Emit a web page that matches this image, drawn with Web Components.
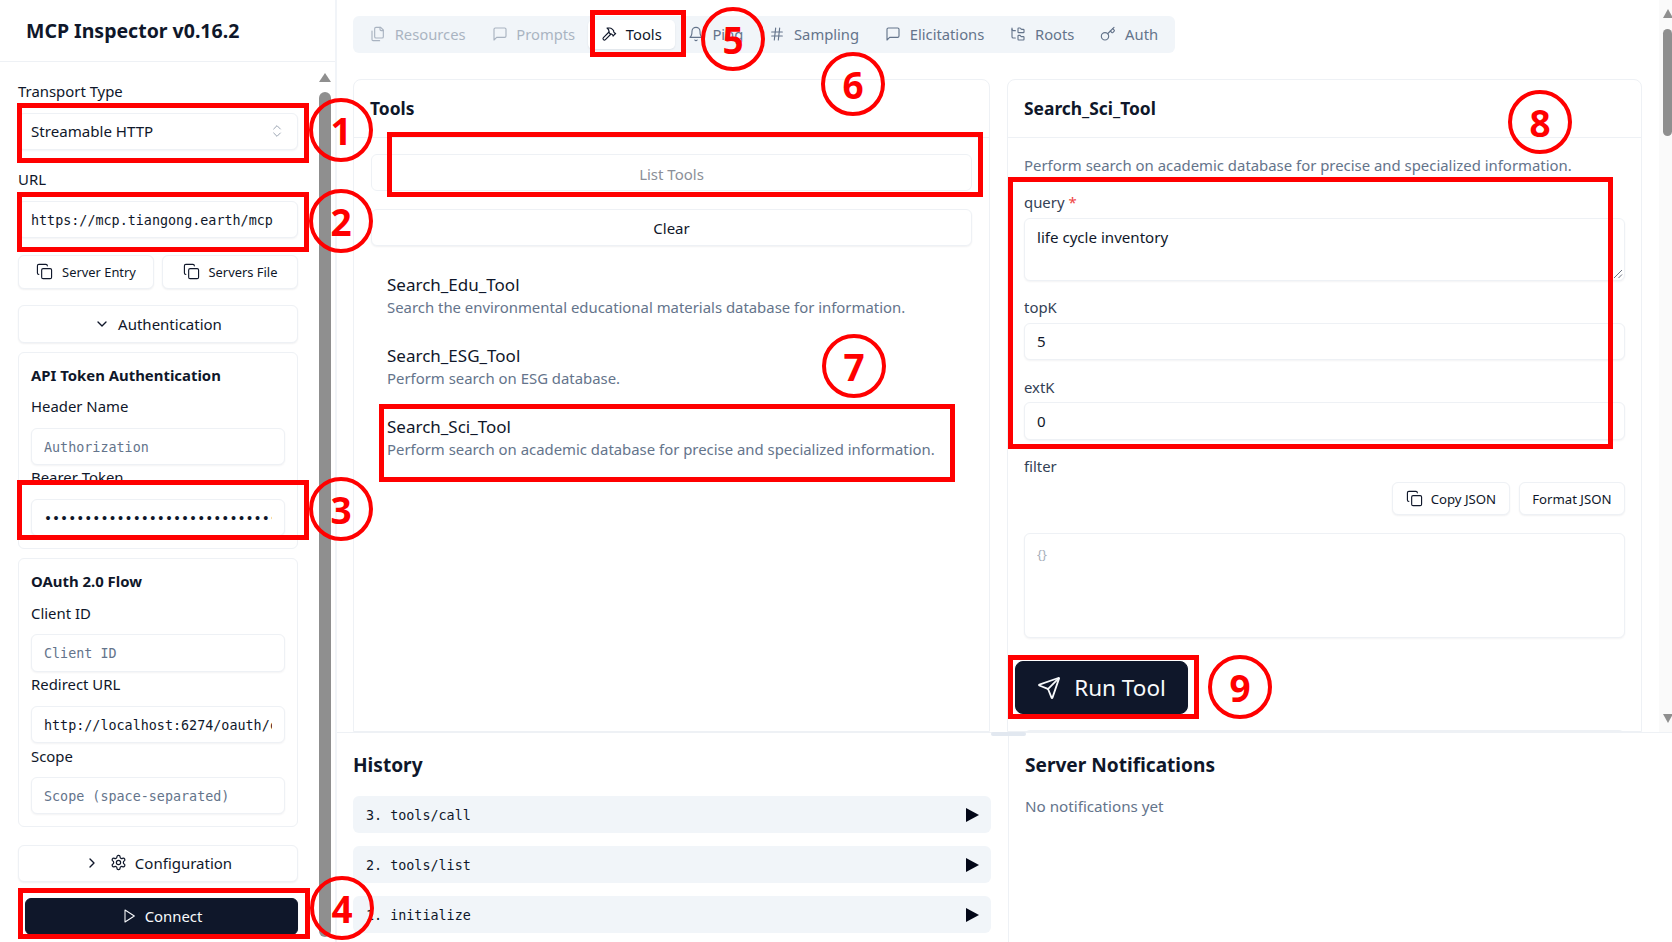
<!DOCTYPE html>
<html lang="en">
<head>
<meta charset="utf-8">
<title>MCP Inspector</title>
<style>
html, body { margin: 0; height: 942px; overflow: hidden; background: #fff; }
body { font: 14.9px/20px "Noto Sans", sans-serif; color: #0f172a; position: relative; }
</style>
</head>
<body>
<mcp-app></mcp-app>

<script>
// icon paths, lucide shapes
const ICONS = {
  copy: '<rect x="8" y="8" width="14" height="14" rx="2"/><path d="M4 16c-1.1 0-2-.9-2-2V4c0-1.1.9-2 2-2h10c1.1 0 2 .9 2 2"/>',
  files: '<path d="M20 7h-3a2 2 0 0 1-2-2V2"/><path d="M9 18a2 2 0 0 1-2-2V4a2 2 0 0 1 2-2h7l4 4v10a2 2 0 0 1-2 2Z"/><path d="M3 7.6v12.8A1.6 1.6 0 0 0 4.6 22h9.8"/>',
  message: '<path d="M21 15a2 2 0 0 1-2 2H7l-4 4V5a2 2 0 0 1 2-2h14a2 2 0 0 1 2 2z"/>',
  hammer: '<path d="m15 12-8.373 8.373a1 1 0 1 1-3-3L12 9"/><path d="m18 15 4-4"/><path d="m21.5 11.5-1.914-1.914A2 2 0 0 1 19 8.172V7l-2.26-2.26a6 6 0 0 0-4.202-1.756L9 2.96l.92.82A6.18 6.18 0 0 1 12 8.4V10l2 2h1.172a2 2 0 0 1 1.414.586L18.5 14.5"/>',
  bell: '<path d="M6 8a6 6 0 0 1 12 0c0 7 3 9 3 9H3s3-2 3-9"/><path d="M10.3 21a1.94 1.94 0 0 0 3.4 0"/>',
  hash: '<line x1="4" x2="20" y1="9" y2="9"/><line x1="4" x2="20" y1="15" y2="15"/><line x1="10" x2="8" y1="3" y2="21"/><line x1="16" x2="14" y1="3" y2="21"/>',
  tree: '<path d="M20 10a1 1 0 0 0 1-1V6a1 1 0 0 0-1-1h-2.5a1 1 0 0 1-.8-.4l-.9-1.2A1 1 0 0 0 15 3h-2a1 1 0 0 0-1 1v5a1 1 0 0 0 1 1Z"/><path d="M20 21a1 1 0 0 0 1-1v-3a1 1 0 0 0-1-1h-2.9a1 1 0 0 1-.88-.55l-.42-.85a1 1 0 0 0-.92-.6H13a1 1 0 0 0-1 1v5a1 1 0 0 0 1 1Z"/><path d="M3 5a2 2 0 0 0 2 2h3"/><path d="M3 3v13a2 2 0 0 0 2 2h3"/>',
  key: '<path d="m15.5 7.5 2.3 2.3a1 1 0 0 0 1.4 0l2.1-2.1a1 1 0 0 0 0-1.4L19 4"/><path d="m21 2-9.6 9.6"/><circle cx="7.5" cy="15.5" r="5.5"/>',
  down: '<path d="m6 9 6 6 6-6"/>',
  right: '<path d="m9 18 6-6-6-6"/>',
  updown: '<path d="m7 15 5 5 5-5"/><path d="m7 9 5-5 5 5"/>',
  play: '<polygon points="6 3 20 12 6 21 6 3"/>',
  gear: '<path d="M12.22 2h-.44a2 2 0 0 0-2 2v.18a2 2 0 0 1-1 1.73l-.43.25a2 2 0 0 1-2 0l-.15-.08a2 2 0 0 0-2.73.73l-.22.38a2 2 0 0 0 .73 2.73l.15.1a2 2 0 0 1 1 1.72v.51a2 2 0 0 1-1 1.74l-.15.09a2 2 0 0 0-.73 2.73l.22.38a2 2 0 0 0 2.73.73l.15-.08a2 2 0 0 1 2 0l.43.25a2 2 0 0 1 1 1.73V20a2 2 0 0 0 2 2h.44a2 2 0 0 0 2-2v-.18a2 2 0 0 1 1-1.73l.43-.25a2 2 0 0 1 2 0l.15.08a2 2 0 0 0 2.73-.73l.22-.39a2 2 0 0 0-.73-2.73l-.15-.08a2 2 0 0 1-1-1.74v-.5a2 2 0 0 1 1-1.74l.15-.09a2 2 0 0 0 .73-2.73l-.22-.38a2 2 0 0 0-2.73-.73l-.15.08a2 2 0 0 1-2 0l-.43-.25a2 2 0 0 1-1-1.73V4a2 2 0 0 0-2-2z"/><circle cx="12" cy="12" r="3"/>',
  send: '<path d="M14.536 21.686a.5.5 0 0 0 .937-.024l6.5-19a.496.496 0 0 0-.635-.635l-19 6.5a.5.5 0 0 0-.024.937l7.93 3.18a2 2 0 0 1 1.112 1.11z"/><path d="m21.854 2.147-10.94 10.939"/>',
};

function createComponent(name, render) {
  customElements.define(name, class extends HTMLElement {
    connectedCallback() {
      if (this.shadowRoot) return;
      this.attachShadow({ mode: 'open' }).innerHTML = render(this);
    }
  });
}

createComponent('ui-icon', el => `
  <style>:host { display: inline-flex; flex: none; } svg { display: block; }</style>
  <svg width="${el.getAttribute('size') || 16}" height="${el.getAttribute('size') || 16}" viewBox="0 0 24 24" fill="none"
    stroke="currentColor" stroke-width="${el.getAttribute('stroke') || 2}" stroke-linecap="round" stroke-linejoin="round">${ICONS[el.getAttribute('name')]}</svg>`);

createComponent('ui-button', el => `
  <style>
    :host { display: flex; align-items: center; justify-content: center; gap: 8px; height: 37px; box-sizing: border-box; font-size: 15px; padding-bottom: 1px;
      border: 1px solid #eef1f5; border-radius: 6px; background: #fff; box-shadow: 0 1px 2px rgba(15,23,42,.06); white-space: nowrap; }
    :host([dark]) { background: #0f172a; border-color: #0f172a; color: #f8fafc; }
    :host([muted]) { color: #8b8f98; box-shadow: none; }
  </style><slot></slot>`);

createComponent('ui-label', el => `
  <style>:host { display: block; height: 20px; line-height: 18px; white-space: nowrap; }</style><slot></slot>`);

createComponent('text-field', el => `
  <style>
    :host { display: block; position: relative; height: 37px; box-sizing: border-box; padding: 0 12px; border: 1px solid #eef1f5; border-radius: 6px;
      background: #fff; box-shadow: 0 1px 2px rgba(15,23,42,.05); font-size: 15.1px; }
    div { height: 100%; display: flex; align-items: center; overflow: hidden; white-space: nowrap; padding-bottom: 1px; box-sizing: border-box; }
    :host([select]) div { justify-content: space-between; }
    :host([mono]) div { font: 13.4px/20px "DejaVu Sans Mono", monospace; padding: 2px 0 0; }
    :host([placeholder]) div { color: #64748b; }
    :host([top]) div { align-items: flex-start; padding-top: 8px; height: auto; }
    svg { position: absolute; right: 1px; bottom: 1px; }
  </style><div><slot></slot></div>${el.hasAttribute('resize') ? '<svg width="10" height="10" viewBox="0 0 10 10" stroke="#6b7280" stroke-width="1" fill="none"><path d="M1 9 L9 1 M5.5 9 L9 5.5"/></svg>' : ''}`);

createComponent('side-card', el => `
  <style>
    :host { display: block; box-sizing: border-box; padding: 12px 12px 12px; border: 1px solid #eef1f5; border-radius: 6px; background: #fff; }
    h3 { margin: 0; font-size: 14.9px; line-height: 20px; height: 20px; font-weight: 700; }
  </style><h3>${el.getAttribute('title')}</h3><slot></slot>`);

createComponent('fake-scrollbar', el => `
  <style>
    :host { display: flex; flex-direction: column; align-items: center; flex: none; }
    .up { width: 0; height: 0; border: solid transparent; border-width: 0 var(--aw) 9px; border-bottom-color: #8f8f8f; margin-top: var(--top); }
    .thumb { width: 100%; height: var(--h); margin-top: var(--gap); background: #8f8f8f; border-radius: 6px; flex: none; }
    .down { display: var(--down, block); width: 0; height: 0; border: solid transparent; border-width: 9px var(--aw) 0; border-top-color: #8f8f8f; margin-top: auto; margin-bottom: var(--bot, 0); }
  </style><div class="up"></div><div class="thumb"></div><div class="down"></div>`);

createComponent('side-bar', el => `
  <style>
    :host { display: flex; flex-direction: column; height: 942px; box-sizing: border-box; border-right: 2px solid #f1f4f8; overflow: hidden; }
    header { height: 62px; flex: none; box-sizing: border-box; border-bottom: 1px solid #eef1f5; padding-left: 26px; display: flex; align-items: center; }
    h1 { margin: 0; font-size: 19.5px; line-height: 28px; font-weight: 700; }
    .scroller { flex: 1; min-height: 0; display: flex; padding-right: 4px; }
    .content { width: 280px; margin-left: 18px; margin-right: 21px; padding-top: 20px; flex: none; }
    .btns { display: flex; gap: 8px; margin-top: 17px; }
    .btns ui-button { flex: 1; height: 34px; font-size: 12.9px; gap: 9px; }
    fake-scrollbar { width: 12px; --top: 11px; --aw: 6px; --gap: 10px; --h: 845px; --down: none; }
    .t-input { margin-top: 11px; }
  </style>
  <header><h1>MCP Inspector v0.16.2</h1></header>
  <div class="scroller">
    <div class="content">
      <ui-label>Transport Type</ui-label>
      <text-field class="t-input" select>Streamable HTTP<ui-icon name="updown" size="16" stroke="1.5" style="color:#9aa4b2"></ui-icon></text-field>
      <ui-label style="margin-top:20px">URL</ui-label>
      <text-field class="t-input" mono>https://mcp.tiangong.earth/mcp</text-field>
      <div class="btns">
        <ui-button><ui-icon name="copy" size="17" stroke="1.6"></ui-icon>Server Entry</ui-button>
        <ui-button><ui-icon name="copy" size="17" stroke="1.6"></ui-icon>Servers File</ui-button>
      </div>
      <ui-button style="margin-top:16px;height:38px"><ui-icon name="down" size="16"></ui-icon>Authentication</ui-button>
      <side-card title="API Token Authentication" style="margin-top:9px;height:197px">
        <ui-label style="margin-top:12px">Header Name</ui-label>
        <text-field class="t-input" mono placeholder>Authorization</text-field>
        <ui-label style="margin-top:3px">Bearer Token</ui-label>
        <text-field class="t-input" mono>•••••••••••••••••••••••••••••••</text-field>
      </side-card>
      <side-card title="OAuth 2.0 Flow" style="margin-top:9px;height:269px">
        <ui-label style="margin-top:13px">Client ID</ui-label>
        <text-field mono placeholder style="margin-top:10px;height:38px">Client ID</text-field>
        <ui-label style="margin-top:3px">Redirect URL</ui-label>
        <text-field class="t-input" mono>http://localhost:6274/oauth/callback</text-field>
        <ui-label style="margin-top:4px">Scope</ui-label>
        <text-field mono placeholder style="margin-top:10px">Scope (space-separated)</text-field>
      </side-card>
      <ui-button style="margin-top:18px;padding-bottom:2px"><ui-icon name="right" size="16"></ui-icon><ui-icon name="gear" size="17" stroke="1.7" style="margin-left:2px"></ui-icon>Configuration</ui-button>
      <ui-button dark style="margin-top:16px;margin-left:7px;font-size:14.9px;padding-bottom:2px"><ui-icon name="play" size="16" stroke="1.6"></ui-icon>Connect</ui-button>
    </div>
    <fake-scrollbar></fake-scrollbar>
  </div>`);

createComponent('tab-item', el => `
  <style>
    :host { display: flex; align-items: center; gap: 8.7px; padding: 0 13px 1px; box-sizing: border-box; height: 29px; border-radius: 5px; color: #64748b; white-space: nowrap; font-size: 14.75px; }
    :host([off]) { opacity: .5; }
    :host([active]) { background: #fff; color: #0f172a; box-shadow: 0 1px 2px rgba(15,23,42,.08); }
  </style><ui-icon name="${el.getAttribute('icon')}" size="16" stroke="1.7"></ui-icon><slot></slot>`);

createComponent('nav-tabs', el => `
  <style>
    :host { display: flex; align-items: center; width: fit-content; height: 37px; padding: 0 4px; background: #f1f5f9; border-radius: 6px; }
  </style><slot></slot>`);

createComponent('panel-card', el => `
  <style>
    :host { display: block; min-width: 0; box-sizing: border-box; border: 1px solid #eef1f5; border-radius: 8px 8px 0 0; background: #fff; height: 653px; overflow: hidden; }
    header { height: 58px; box-sizing: border-box; border-bottom: 1px solid #eef1f5; padding: 16px 16px 0; font-size: 17.4px; line-height: 24px; font-weight: 700; }
    .body { padding: 16px 17px 0; }
  </style><header>${el.getAttribute('title')}</header><div class="body"><slot></slot></div>`);

createComponent('tool-item', el => `
  <style>
    :host { display: block; padding-left: 16px; }
    .n { font-size: 17px; line-height: 24px; }
    .d { color: #64748b; line-height: 20px; margin-top: .5px; white-space: nowrap; }
  </style><div class="n">${el.getAttribute('name')}</div><div class="d"><slot></slot></div>`);

createComponent('history-row', el => `
  <style>
    :host { display: flex; align-items: center; justify-content: space-between; height: 37px; box-sizing: border-box; padding: 0 12px 0 13px;
      background: #f1f5f9; border-radius: 6px; font: 13.4px/20px "DejaVu Sans Mono", monospace; }
    span { margin-top: 2px; }
    svg { display: block; }
  </style><span><slot></slot></span><svg width="13" height="14" viewBox="0 0 13 14"><path d="M0 0 L13 7 L0 14 Z" fill="#020617"/></svg>`);

createComponent('anno-box', el => `
  <style>
    :host { position: absolute; box-sizing: border-box; border: 5px solid #ff0000; pointer-events: none;
      left: ${el.getAttribute('x')}px; top: ${el.getAttribute('y')}px; width: ${el.getAttribute('w')}px; height: ${el.getAttribute('h')}px; }
  </style>`);

createComponent('anno-circle', el => `
  <style>
    :host { position: absolute; box-sizing: border-box; width: 64px; height: 64px; border: 4.5px solid #ff0000; border-radius: 50%;
      display: flex; align-items: center; justify-content: center; color: #ff0000; font: 700 37px/1 "Noto Sans", sans-serif;
      left: ${el.getAttribute('cx') - 32}px; top: ${el.getAttribute('cy') - 32}px; }
  </style><slot></slot>`);

createComponent('anno-layer', el => `
  <style>:host { position: absolute; inset: 0; display: block; }</style>
  <anno-box x="17" y="103" w="292" h="60"></anno-box><anno-circle cx="341" cy="130">1</anno-circle>
  <anno-box x="17" y="192" w="292" h="60"></anno-box><anno-circle cx="341" cy="221">2</anno-circle>
  <anno-box x="17" y="480" w="292" h="60"></anno-box><anno-circle cx="341" cy="509">3</anno-circle>
  <anno-box x="18" y="888" w="292" h="51"></anno-box><anno-circle cx="342" cy="908">4</anno-circle>
  <anno-box x="590" y="10" w="96" h="47"></anno-box><anno-circle cx="733" cy="39">5</anno-circle>
  <anno-circle cx="853" cy="84">6</anno-circle>
  <anno-box x="387" y="132" w="596" h="65"></anno-box>
  <anno-box x="379" y="404" w="576" h="78"></anno-box><anno-circle cx="854" cy="366">7</anno-circle>
  <anno-box x="1008" y="177" w="605" h="272"></anno-box><anno-circle cx="1540" cy="122">8</anno-circle>
  <anno-box x="1008" y="655" w="191" h="64"></anno-box><anno-circle cx="1240" cy="687">9</anno-circle>`);

createComponent('tools-panel', el => `
  <style>
    :host { display: grid; grid-template-columns: 637px 635px; gap: 17px; margin-top: 26px; }
    ui-button { height: 37px; }
    .desc { color: #64748b; white-space: nowrap; }
    .lbl { color: #334155; }
    .req { color: #ef4444; }
    .row { display: flex; justify-content: flex-end; gap: 9px; margin-top: 5px; }
    .row ui-button { height: 33px; font-size: 13.2px; padding: 0 12.5px; gap: 8px; }
    .run { width: 173px; height: 53px; margin: 23px 0 0 -9px; border-radius: 8px; font-size: 22.5px; gap: 13px; padding-bottom: 0; }
    .form { margin: 0 -1px; }
  </style>
  <panel-card title="Tools">
    <ui-button muted style="padding:2px 0 0">List Tools</ui-button>
    <ui-button style="margin-top:18px;padding:1px 0 0">Clear</ui-button>
    <tool-item name="Search_Edu_Tool" style="margin-top:26.5px">Search the environmental educational materials database for information.</tool-item>
    <tool-item name="Search_ESG_Tool" style="margin-top:26.5px">Perform search on ESG database.</tool-item>
    <tool-item name="Search_Sci_Tool" style="margin-top:26.5px">Perform search on academic database for precise and specialized information.</tool-item>
  </panel-card>
  <panel-card title="Search_Sci_Tool">
    <div class="form">
    <div class="desc" style="margin-top:1px">Perform search on academic database for precise and specialized information.</div>
    <ui-label class="lbl" style="margin-top:18px">query <span class="req">*</span></ui-label>
    <text-field top resize style="margin-top:5px;height:63px">life cycle inventory</text-field>
    <ui-label class="lbl" style="margin-top:17px">topK</ui-label>
    <text-field style="margin-top:5px">5</text-field>
    <ui-label class="lbl" style="margin-top:18px">extK</ui-label>
    <text-field style="margin-top:4px;height:38px">0</text-field>
    <ui-label class="lbl" style="margin-top:17px">filter</ui-label>
    <div class="row">
      <ui-button><ui-icon name="copy" size="17" stroke="1.6"></ui-icon>Copy JSON</ui-button>
      <ui-button>Format JSON</ui-button>
    </div>
    <text-field top placeholder style="margin-top:18px;height:105px;font-size:13px"><span style="color:#a8b0bb;margin-top:2px">{}</span></text-field>
    <ui-button dark class="run"><ui-icon name="send" size="24" stroke="1.8"></ui-icon>Run Tool</ui-button>
    <div style="height:40px;margin-top:16px;border:1px solid #eef1f5;border-radius:6px"></div>
    </div>
  </panel-card>`);

createComponent('bottom-panel', el => `
  <style>
    :host { display: flex; height: 210px; box-sizing: border-box; border-top: 1px solid #eef1f5; position: relative; }
    section { box-sizing: border-box; padding: 19px 17px 0; }
    .left { width: 672px; padding-left: 16px; border-right: 1px solid #eef1f5; }
    .right { flex: 1; padding-left: 16px; }
    h2 { margin: 0; font-size: 19.1px; line-height: 26px; font-weight: 700; }
    history-row + history-row { margin-top: 13px; }
    history-row:first-of-type { margin-top: 18px; }
    p { margin: 18px 0 0; color: #64748b; font-size: 15.2px; }
    .grip { position: absolute; left: 654px; top: -1px; width: 35px; height: 4px; background: #e2e8f0; border-radius: 2px; }
  </style>
  <section class="left"><h2>History</h2>
    <history-row>3. tools/call</history-row>
    <history-row>2. tools/list</history-row>
    <history-row>1. initialize</history-row>
  </section>
  <section class="right"><h2>Server Notifications</h2><p>No notifications yet</p></section>
  <div class="grip"></div>`);

createComponent('mcp-app', el => `
  <style>
    :host { display: flex; height: 942px; }
    side-bar { width: 337px; flex: none; }
    main { flex: 1; min-width: 0; display: flex; flex-direction: column; }
    .upper { height: 732px; flex: none; display: flex; overflow: hidden; }
    .pane { flex: 1; min-width: 0; padding: 16px 17px 0 16px; }
    .track { width: 13px; flex: none; background: #fafafa; display: flex; justify-content: flex-end; }
    fake-scrollbar { width: 9px; --top: 9px; --aw: 5px; --gap: 11px; --h: 107px; --bot: 9px; }
  </style>
  <side-bar></side-bar>
  <main>
    <div class="upper">
      <div class="pane">
        <nav-tabs>
          <tab-item icon="files" off>Resources</tab-item>
          <tab-item icon="message" off>Prompts</tab-item>
          <tab-item icon="hammer" active>Tools</tab-item>
          <tab-item icon="bell">Ping</tab-item>
          <tab-item icon="hash">Sampling</tab-item>
          <tab-item icon="message">Elicitations</tab-item>
          <tab-item icon="tree">Roots</tab-item>
          <tab-item icon="key">Auth</tab-item>
        </nav-tabs>
        <tools-panel></tools-panel>
      </div>
      <div class="track"><fake-scrollbar></fake-scrollbar></div>
    </div>
    <bottom-panel></bottom-panel>
  </main>
  <anno-layer></anno-layer>`);
</script>
</body>
</html>
